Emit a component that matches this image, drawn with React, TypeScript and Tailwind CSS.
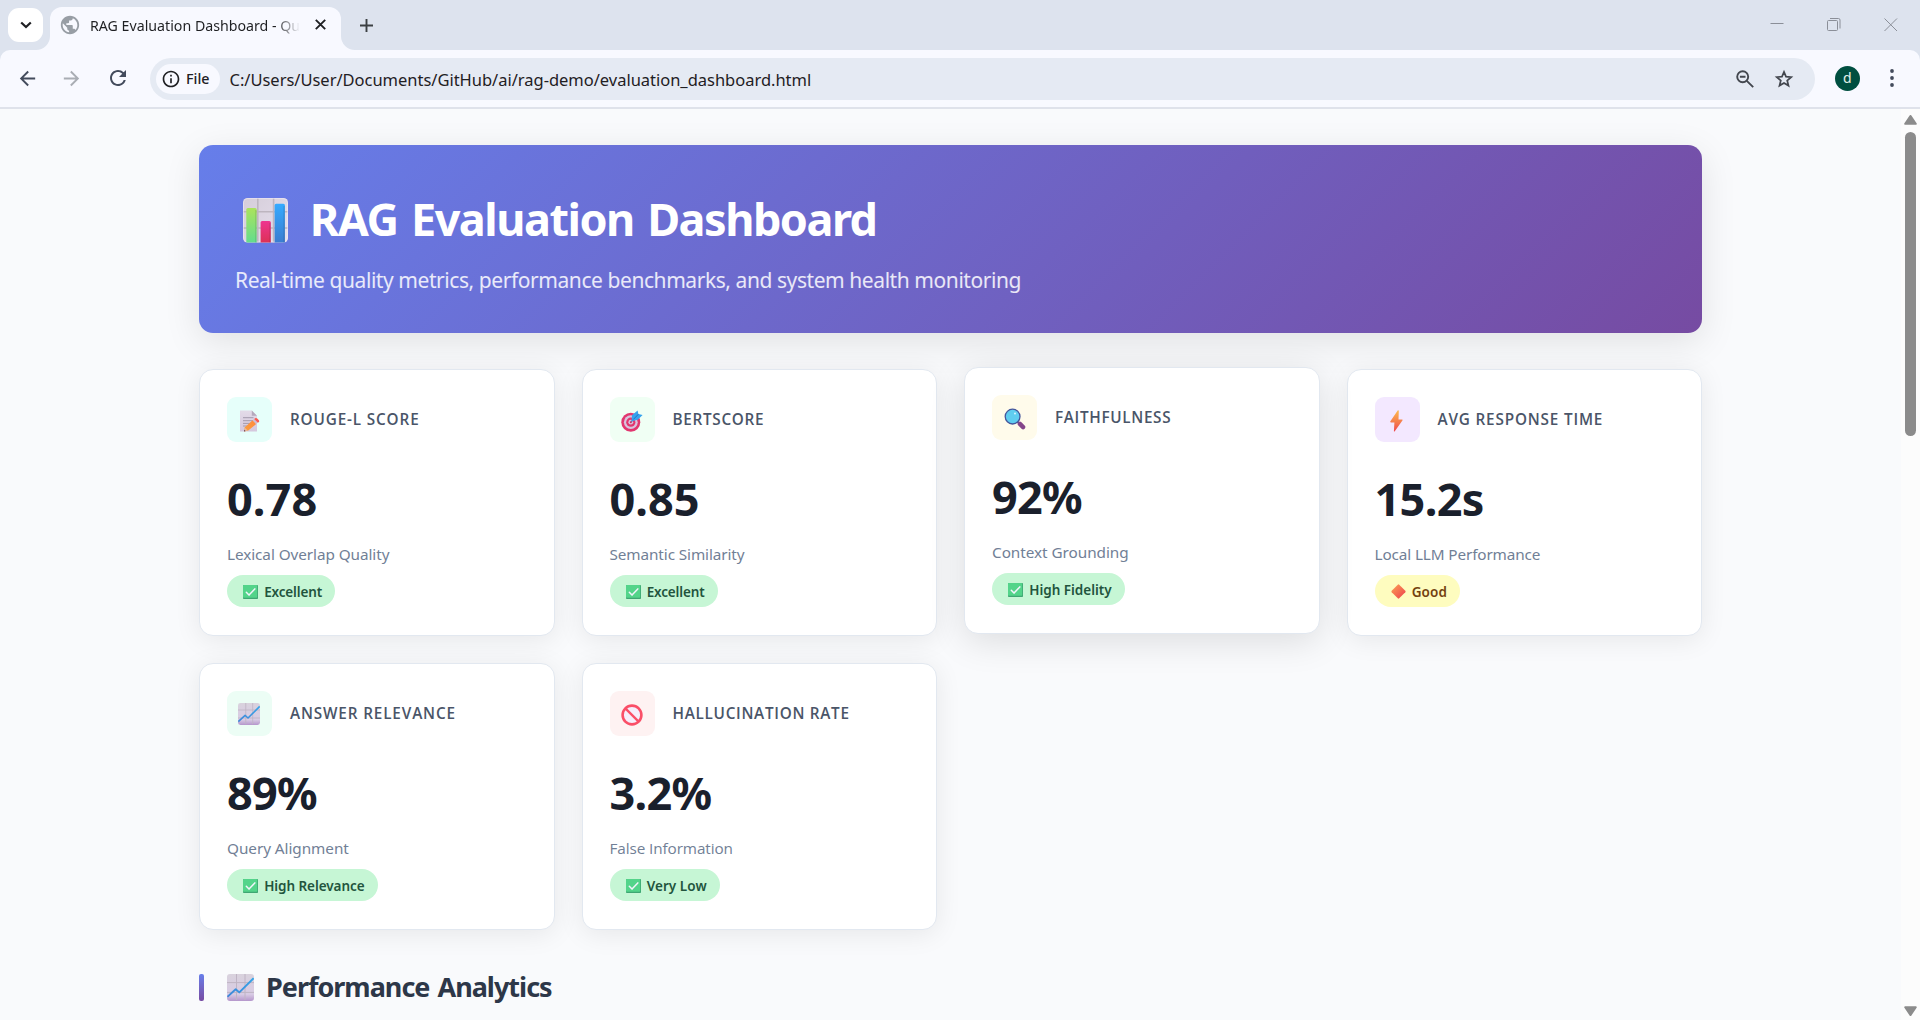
import React, { type ReactNode } from 'react';
import { MdArrowBack, MdArrowForward, MdInfoOutline, MdPublic, MdRefresh } from 'react-icons/md';

function BarChartEmoji() {
  return (
    <svg viewBox="0 0 45 45" className="size-[45px] shrink-0">
      <defs>
        <linearGradient id="bc-bg" x1="0" y1="0" x2="1" y2="1">
          <stop offset="0" stopColor="#d5cdd9" />
          <stop offset="1" stopColor="#e6e0ee" />
        </linearGradient>
        <linearGradient id="bc-green" x1="0" y1="0" x2="0" y2="1">
          <stop offset="0" stopColor="#abe35c" />
          <stop offset="1" stopColor="#62dd8e" />
        </linearGradient>
        <linearGradient id="bc-red" x1="0" y1="0" x2="0" y2="1">
          <stop offset="0" stopColor="#ee3590" />
          <stop offset="1" stopColor="#dc3155" />
        </linearGradient>
        <linearGradient id="bc-blue" x1="0" y1="0" x2="0" y2="1">
          <stop offset="0" stopColor="#35aaff" />
          <stop offset="1" stopColor="#3b7cd0" />
        </linearGradient>
        <clipPath id="bc-clip"><rect width="45" height="44.5" rx="4.5" /></clipPath>
      </defs>
      <g clipPath="url(#bc-clip)">
        <rect width="45" height="45" fill="url(#bc-bg)" />
        <path d="M14.8 0V45M30.6 0V45M0 13.8H45M0 30H45" stroke="#bdb5bf" strokeWidth="1.6" />
        <rect width="44" height="43.5" x=".5" y=".5" rx="4" fill="none" stroke="#efe9f5" strokeOpacity=".6" />
        <path d="M3.3 45V11.5a1.5 1.5 0 0 1 1.5-1.5h7.4a1.5 1.5 0 0 1 1.5 1.5V45z" fill="url(#bc-green)" />
        <path d="M17.6 45V24.5a1.5 1.5 0 0 1 1.5-1.5h7.2a1.5 1.5 0 0 1 1.5 1.5V45z" fill="url(#bc-red)" />
        <path d="M31.6 45V7.2a1.5 1.5 0 0 1 1.5-1.5h7.3a1.5 1.5 0 0 1 1.5 1.5V45z" fill="url(#bc-blue)" />
        <path d="M12.9 12V45M27 25V45M41.1 8V45" stroke="#000" strokeOpacity=".1" strokeWidth="1.5" />
      </g>
    </svg>
  );
}

function TrendEmoji({ className }: { className: string }) {
  return (
    <svg viewBox="0 0 27 27" className={className}>
      <defs>
        <linearGradient id="tr-bg" x1="0" y1="0" x2="0" y2="1">
          <stop offset="0" stopColor="#d9d2dd" />
          <stop offset=".75" stopColor="#d8cbe4" />
          <stop offset="1" stopColor="#b596cc" />
        </linearGradient>
        <linearGradient id="tr-line" x1="0" y1="1" x2="1" y2="0">
          <stop offset="0" stopColor="#3f86d8" />
          <stop offset="1" stopColor="#35a5e8" />
        </linearGradient>
      </defs>
      <rect width="27" height="27" rx="3" fill="url(#tr-bg)" />
      <path d="M9.5 0V26M18 0V26M0 8.6H27M0 18.4H27" stroke="#bfb4c4" strokeWidth="1" />
      <path d="M.4 22.8 8.7 15.2l3.6 3.2L26.6 4.2" fill="none" stroke="url(#tr-line)" strokeWidth="1.9" strokeLinejoin="round" />
    </svg>
  );
}

function MemoEmoji() {
  return (
    <svg viewBox="0 0 22 22" className="mt-0.5 ml-[3px] size-[22px]">
      <defs>
        <linearGradient id="mm-pencil" x1="1" y1="0" x2="0" y2="1">
          <stop offset="0" stopColor="#ff8a3c" />
          <stop offset="1" stopColor="#f9a03f" />
        </linearGradient>
        <linearGradient id="mm-paper" x1="0" y1="0" x2="0" y2="1">
          <stop offset="0" stopColor="#e3dbe8" />
          <stop offset="1" stopColor="#d5c8dd" />
        </linearGradient>
      </defs>
      <path d="M0 .5h11.8L17 5.7V21.5H0z" fill="url(#mm-paper)" />
      <path d="M11.8 .5V5.7H17z" fill="#b5a9bc" />
      <path d="M3 7.7h10.5M3 10.7h10.5M3 13.4h8M3 16h5" stroke="#9d93a6" strokeWidth=".9" />
      <path d="M4.6 17.6 12.6 10.2l3.6 3.8-8 6.6-4 .9z" fill="url(#mm-pencil)" />
      <path d="M4.6 17.6 4 21.4l3.8-.8z" fill="#e9b9a0" />
      <path d="M4.3 19.8 4 21.4l1.6-.3z" fill="#553b4f" />
      <path d="m12.6 10.2 1.6-1.4 3.6 3.8-1.6 1.4z" fill="#cdbdd4" />
      <path d="m14.2 8.9 1-.7c.7-.5 1.4-.4 2 .2l1.7 1.8c.5.6.5 1.2 0 1.7l-1 .8z" fill="#fb5a4f" />
    </svg>
  );
}

function TargetEmoji() {
  return (
    <svg viewBox="0 0 22 22" className="mt-0.5 size-[22px]">
      <circle cx="9.8" cy="12.2" r="9.5" fill="#e2376f" />
      <circle cx="9.8" cy="12.2" r="6.9" fill="#d9c4dd" />
      <circle cx="9.8" cy="12.2" r="4.6" fill="#e2376f" />
      <circle cx="9.8" cy="12.2" r="2.4" fill="#d9c4dd" />
      <circle cx="9.8" cy="12.2" r="1" fill="#d63063" />
      <path d="m10 12 6.5-6.5" stroke="#7d6a9c" strokeWidth="1.2" />
      <path d="m10.6 11.2.4-6L16.6.5l.8 3.6 4.2 1-4.8 4.7z" fill="#36a3ee" />
      <path d="m12.4 9.4 5-5.2" stroke="#2770c4" strokeWidth="1" />
    </svg>
  );
}

function MagnifierEmoji() {
  return (
    <svg viewBox="0 0 22 22" className="mt-0.5 size-[22px]">
      <path d="m13.4 13.6 2 2" stroke="#6b5a8a" strokeWidth="1.6" />
      <path d="m15.9 15.9 3.2 3.2" stroke="#84458a" strokeWidth="4.4" strokeLinecap="round" />
      <circle cx="8.6" cy="8.6" r="7.4" fill="#5fcdf0" stroke="#44559b" strokeWidth="1.3" />
      <circle cx="11" cy="5.6" r="1" fill="#d8f6ff" />
    </svg>
  );
}

function BoltEmoji() {
  return (
    <svg viewBox="0 0 22 22" className="mt-0.5 ml-[-2px] size-[22px]">
      <defs>
        <linearGradient id="bolt" x1="0" y1="0" x2="0" y2="1">
          <stop offset="0" stopColor="#fdbb4b" />
          <stop offset="1" stopColor="#ee4a4f" />
        </linearGradient>
      </defs>
      <path d="M12.7.6 5.4 11.3c-.4.7-.1 1.2.6 1.2h3.4L8.9 21c0 .6.5.7.9.2l7.6-10.6c.4-.7.1-1.2-.6-1.2h-3.3l.3-8.4c0-.7-.7-.9-1.1-.4z" fill="url(#bolt)" />
    </svg>
  );
}

function ProhibitedEmoji() {
  return (
    <svg viewBox="0 0 22 22" className="mt-0.5 ml-[-1px] size-[22px]">
      <circle cx="11" cy="11" r="9.4" fill="#f6eefb" stroke="#fa4f68" strokeWidth="2.6" />
      <path d="m4.6 4.6 12.8 12.8" stroke="#fa4f68" strokeWidth="2.3" />
    </svg>
  );
}

function CheckEmoji() {
  return (
    <svg viewBox="0 0 15 14" className="h-3.5 w-[15px] shrink-0">
      <rect width="15" height="14" rx=".8" fill="#3fa673" />
      <rect width="14.2" height="12.8" rx=".8" fill="#53d48a" />
      <path d="m3.3 7.3 2.7 2.8 5.8-6.2" fill="none" stroke="#f2f4fb" strokeWidth="1.5" strokeLinecap="round" strokeLinejoin="round" />
    </svg>
  );
}

function DiamondEmoji() {
  return (
    <svg viewBox="0 0 15 15" className="size-[15px] shrink-0">
      <defs>
        <linearGradient id="dia" x1="0" y1="0" x2="1" y2="1">
          <stop offset=".2" stopColor="#f98d52" />
          <stop offset=".8" stopColor="#f0524f" />
        </linearGradient>
      </defs>
      <path d="M6.8.7a1 1 0 0 1 1.4 0l6.1 6.1a1 1 0 0 1 0 1.4l-6.1 6.1a1 1 0 0 1-1.4 0L.7 8.2a1 1 0 0 1 0-1.4z" fill="url(#dia)" />
    </svg>
  );
}

type Metric = {
  icon: ReactNode;
  iconBg: string;
  label: string;
  labelClass: string;
  value: string;
  valueClass: string;
  sub: string;
  subClass: string;
  badge: string;
  badgeClass: string;
  warn?: boolean;
  raised?: boolean;
};

const metrics: Metric[] = [
  {
    icon: <MemoEmoji />, iconBg: 'bg-[#e6fffa]', label: 'ROUGE-L SCORE', labelClass: 'tracking-[0.85px]',
    value: '0.78', valueClass: 'tracking-[0.1px]', sub: 'Lexical Overlap Quality', subClass: 'tracking-[-0.07px]',
    badge: 'Excellent', badgeClass: 'tracking-[-0.15px]',
  },
  {
    icon: <TargetEmoji />, iconBg: 'bg-[#f0fff4]', label: 'BERTSCORE', labelClass: 'tracking-[0.7px]',
    value: '0.85', valueClass: 'tracking-normal', sub: 'Semantic Similarity', subClass: 'tracking-[-0.1px]',
    badge: 'Excellent', badgeClass: 'tracking-[-0.15px]',
  },
  {
    icon: <MagnifierEmoji />, iconBg: 'bg-[#fffbeb]', label: 'FAITHFULNESS', labelClass: 'tracking-[0.67px]',
    value: '92%', valueClass: 'tracking-[-0.7px]', sub: 'Context Grounding', subClass: 'tracking-[-0.04px]',
    badge: 'High Fidelity', badgeClass: 'tracking-normal', raised: true,
  },
  {
    icon: <BoltEmoji />, iconBg: 'bg-[#f3e8ff]', label: 'AVG RESPONSE TIME', labelClass: 'tracking-[0.82px]',
    value: '15.2s', valueClass: 'tracking-[-0.65px]', sub: 'Local LLM Performance', subClass: 'tracking-[-0.12px]',
    badge: 'Good', badgeClass: 'tracking-[0.1px]', warn: true,
  },
  {
    icon: <TrendEmoji className="mt-px ml-[-1px] size-[22px]" />, iconBg: 'bg-[#ecfdf5]', label: 'ANSWER RELEVANCE', labelClass: 'tracking-[0.85px]',
    value: '89%', valueClass: 'tracking-[-0.7px]', sub: 'Query Alignment', subClass: 'tracking-[-0.05px]',
    badge: 'High Relevance', badgeClass: 'tracking-[-0.06px]',
  },
  {
    icon: <ProhibitedEmoji />, iconBg: 'bg-[#fef2f2]', label: 'HALLUCINATION RATE', labelClass: 'tracking-[0.71px]',
    value: '3.2%', valueClass: 'tracking-[-0.7px]', sub: 'False Information', subClass: "tracking-[-0.09px] font-['Open_Sans',sans-serif]",
    badge: 'Very Low', badgeClass: 'tracking-[0.05px]',
  },
];

function MetricCard({ m }: { m: Metric }) {
  return (
    <article
      className={
        'h-[266.5px] rounded-[14px] border border-[#e2e8f0] bg-white p-[27px] ' +
        (m.raised
          ? '-translate-y-0.5 shadow-[0_7px_36px_rgba(0,0,0,0.12)]'
          : 'shadow-[0_4px_27px_rgba(0,0,0,0.08)]')
      }
    >
      <div className="flex items-center gap-[18px]">
        <div className={'flex size-[45px] items-center justify-center rounded-[9px] ' + m.iconBg}>{m.icon}</div>
        <h3 className={"pb-0.5 font-['Open_Sans',sans-serif] text-[15.3px] leading-6 font-semibold whitespace-nowrap text-[#4a5568] " + m.labelClass}>
          {m.label}
        </h3>
      </div>
      <div className={'mt-[33.6px] text-[45px] leading-[45px] font-bold text-[#1a202c] ' + m.valueClass}>{m.value}</div>
      <div className={'mt-[21.4px] text-[15.3px] leading-6 text-[#718096] ' + m.subClass}>{m.sub}</div>
      <span
        className={
          'mt-[9px] inline-flex h-[32.4px] items-center gap-[6.2px] rounded-full pt-px pr-[13.2px] pl-4 text-[13.5px] leading-8 font-semibold ' +
          (m.warn ? 'bg-[#fefcbf] text-[#744210] ' : 'bg-[#c6f6d5] text-[#22543d] ') +
          m.badgeClass
        }
      >
        {m.warn ? <DiamondEmoji /> : <CheckEmoji />}
        {m.badge}
      </span>
    </article>
  );
}

function TabStrip() {
  return (
    <div className="flex h-[50px] items-start bg-[#dde3ee] text-[#1f2023]">
      <button className="mt-2 ml-2 flex h-[34px] w-[35px] items-center justify-center rounded-[11px] bg-white">
        <svg viewBox="0 0 12 8" className="h-2 w-3" fill="none" stroke="currentColor" strokeWidth="2.2">
          <path d="m1.2 1.5 4.8 4.6 4.8-4.6" />
        </svg>
      </button>
      <div className="relative ml-[7px] flex h-[43px] w-[291px] items-center self-end rounded-t-[12px] bg-[#f8f9ff]">
        <svg viewBox="0 0 14 14" className="absolute bottom-0 -left-3.5 size-3.5" fill="#f8f9ff"><path d="M14 0v14H0A14 14 0 0 0 14 0z" /></svg>
        <svg viewBox="0 0 14 14" className="absolute -right-3.5 bottom-0 size-3.5" fill="#f8f9ff"><path d="M0 0v14h14A14 14 0 0 1 0 0z" /></svg>
        <MdPublic className="mb-2 ml-[9px] size-[22px] text-[#989ea5]" />
        <span className="mb-[6px] ml-[9px] w-[210px] bg-linear-to-r from-[#1f2023] from-88% to-transparent bg-clip-text text-[14.2px] leading-5 whitespace-nowrap text-transparent">
          RAG Evaluation Dashboard - Qu
        </span>
        <svg viewBox="0 0 11 11" className="mb-[8px] ml-[14.5px] size-[11px]" stroke="currentColor" strokeWidth="1.9">
          <path d="m.8.8 9.4 9.4M10.2.8.8 10.2" />
        </svg>
      </div>
      <svg viewBox="0 0 13 13" className="mt-[19px] ml-[19px] size-[13px]" stroke="#3c4043" strokeWidth="1.9">
        <path d="M6.5 0v13M0 6.5h13" />
      </svg>
      <div className="mt-[18px] mr-[22px] ml-auto flex items-start gap-[43px] text-[#8b8f98]">
        <svg viewBox="0 0 14 14" className="size-3.5" stroke="currentColor" strokeWidth="1"><path d="M.5 5.5h13" /></svg>
        <svg viewBox="0 0 14 14" className="size-3.5" fill="none" stroke="currentColor" strokeWidth="1">
          <rect x=".5" y="2.5" width="10" height="10" rx="1" />
          <path d="M3 .5h8.5a1.5 1.5 0 0 1 1.5 1.5v8.5" />
        </svg>
        <svg viewBox="0 0 14 14" className="size-3.5" stroke="currentColor" strokeWidth="1"><path d="m.5.5 12.5 12.5M13 .5.5 13" /></svg>
      </div>
    </div>
  );
}

function Toolbar() {
  return (
    <div className="bg-[#dde3ee]">
      <div className="flex h-[59px] items-center rounded-t-[10px] border-b-2 border-[#dfe2eb] bg-[#f8f9ff] pb-px text-[#434b5c]">
        <MdArrowBack className="ml-4 size-[23px]" />
        <MdArrowForward className="ml-[21px] size-[23px] text-[#a9adb4]" />
        <MdRefresh className="ml-[22.5px] size-[24px]" />
        <div className="mt-px ml-[20.5px] flex h-[42px] flex-1 items-center rounded-full bg-[#e5eaf3] pr-[21px] pl-1.5 text-[#1f2023]">
          <div className="flex h-[30px] w-16 items-center rounded-full bg-[#f8f9ff] pl-[5px]">
            <MdInfoOutline className="size-5" />
            <span className="ml-[5px] text-[14.3px] leading-5 font-medium">File</span>
          </div>
          <span className="mt-0.5 ml-[9.5px] text-[16.5px] leading-6 tracking-[-0.02px]">
            C:/Users/User/Documents/GitHub/ai/rag-demo/evaluation_dashboard.html
          </span>
          <svg viewBox="0 0 18 18" className="ml-auto size-[18px]" fill="none" stroke="#43474e" strokeWidth="1.9">
            <circle cx="6.7" cy="6.7" r="5.5" />
            <path d="m10.8 10.8 6.4 6.4M3.9 6.7h5.6" />
          </svg>
          <svg viewBox="0 0 20 20" className="ml-[20px] size-[20px]" fill="none" stroke="#43474e" strokeWidth="1.7" strokeLinejoin="miter">
            <path d="m10 2.9 2 4.8 5.2.4-4 3.4 1.3 5.1-4.5-2.7-4.5 2.7 1.3-5.1-4-3.4 5.2-.4z" />
          </svg>
        </div>
        <div className="ml-5 flex size-[25px] items-center justify-center rounded-full bg-[#004f40] pb-px text-[14px] leading-none text-[#e3efe9]">d</div>
        <svg viewBox="0 0 4 18" className="mr-[26px] ml-[30.3px] h-[18px] w-1" fill="#434b5c">
          <circle cx="2" cy="2" r="1.9" /><circle cx="2" cy="9" r="1.9" /><circle cx="2" cy="16" r="1.9" />
        </svg>
      </div>
    </div>
  );
}

function Scrollbar() {
  return (
    <div className="flex w-[19px] shrink-0 flex-col items-center bg-[#fcfcfc] pt-1.5 pb-1 text-[#8b8b8b]">
      <svg viewBox="0 0 13 10" className="h-2.5 w-[13px]" fill="currentColor">
        <path d="M5.6.6a1.1 1.1 0 0 1 1.8 0l5.2 7.6a1 1 0 0 1-.8 1.6H1.2a1 1 0 0 1-.8-1.6z" />
      </svg>
      <div className="mt-[7px] h-[304px] w-[11px] rounded-full bg-[#8b8b8b]" />
      <svg viewBox="0 0 13 10" className="mt-auto h-2.5 w-[13px]" fill="currentColor">
        <path d="M5.6 9.4a1.1 1.1 0 0 0 1.8 0l5.2-7.6a1 1 0 0 0-.8-1.6H1.2a1 1 0 0 0-.8 1.6z" />
      </svg>
    </div>
  );
}

export default function App() {
  return (
    <div className="flex h-[1020px] w-[1920px] flex-col overflow-hidden font-['Noto_Sans','Open_Sans',sans-serif]">
      <TabStrip />
      <Toolbar />
      <div className="flex min-h-0 flex-1 bg-[#f9fafc]">
        <main className="min-w-0 flex-1 overflow-hidden pt-9 pr-[199px] pl-[199px]">
          <header className="h-[188px] rounded-[14px] bg-[linear-gradient(135deg,#667eea_0%,#764ba2_100%)] px-9 pt-[41.5px] text-white shadow-[0_9px_36px_rgba(0,0,0,0.1)]">
            <div className="ml-[8.3px] flex items-center gap-[21.4px]">
              <div className="pt-[3px]"><BarChartEmoji /></div>
              <h1 className="text-[45px] leading-[64px] font-bold tracking-[-1.5px] whitespace-nowrap [word-spacing:3.2px]">RAG Evaluation Dashboard</h1>
            </div>
            <p className="mt-3.5 text-[21px] leading-[30px] tracking-[-0.43px] whitespace-nowrap text-white/85">
              Real-time quality metrics, performance benchmarks, and system health monitoring
            </p>
          </header>
          <section className="mt-[36px] grid grid-cols-4 gap-x-[27px] gap-y-[27.5px]">
            {metrics.map((m) => <MetricCard key={m.label} m={m} />)}
          </section>
          <h2 className="mt-[44.4px] flex h-[27px] items-start text-[27px] leading-[25px] font-bold text-[#2d3748]">
            <span className="h-[27px] w-[5px] rounded-[2px] bg-linear-to-b from-[#667eea] to-[#764ba2]" />
            <TrendEmoji className="ml-[22.5px] size-[27px]" />
            <span className="ml-[12.5px] tracking-[-1px] whitespace-nowrap [word-spacing:2px]">Performance Analytics</span>
          </h2>
        </main>
        <Scrollbar />
      </div>
    </div>
  );
}
